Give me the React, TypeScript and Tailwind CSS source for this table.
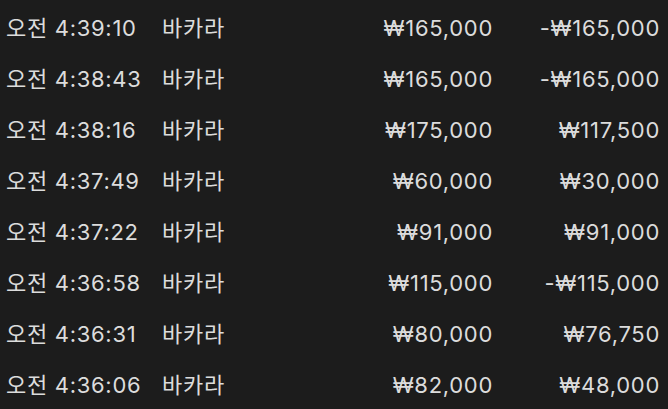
import React from 'react';

const rows = [
  { time: '오전 4:39:10', game: '바카라', bet: '₩165,000', result: '-₩165,000' },
  { time: '오전 4:38:43', game: '바카라', bet: '₩165,000', result: '-₩165,000' },
  { time: '오전 4:38:16', game: '바카라', bet: '₩175,000', result: '₩117,500' },
  { time: '오전 4:37:49', game: '바카라', bet: '₩60,000', result: '₩30,000' },
  { time: '오전 4:37:22', game: '바카라', bet: '₩91,000', result: '₩91,000' },
  { time: '오전 4:36:58', game: '바카라', bet: '₩115,000', result: '-₩115,000' },
  { time: '오전 4:36:31', game: '바카라', bet: '₩80,000', result: '₩76,750' },
  { time: '오전 4:36:06', game: '바카라', bet: '₩82,000', result: '₩48,000' },
];

export default function App() {
  return (
    <div
      className="w-[668px] h-[409px] overflow-hidden bg-[#1c1c1c] text-[#dcdcdc] pt-[3px]"
      style={{ fontFamily: 'Inter, "Noto Sans CJK KR", sans-serif' }}
    >
      {rows.map((r, i) => (
        <div key={i} className="flex items-center h-[51px] text-[22px] tracking-[0.7px]">
          <div className="w-[162px] pl-[6px] whitespace-nowrap">{r.time}</div>
          <div className="w-[150px] whitespace-nowrap">{r.game}</div>
          <div className="w-[181px] text-right whitespace-nowrap">{r.bet}</div>
          <div className="w-[167px] text-right whitespace-nowrap">{r.result}</div>
        </div>
      ))}
    </div>
  );
}
